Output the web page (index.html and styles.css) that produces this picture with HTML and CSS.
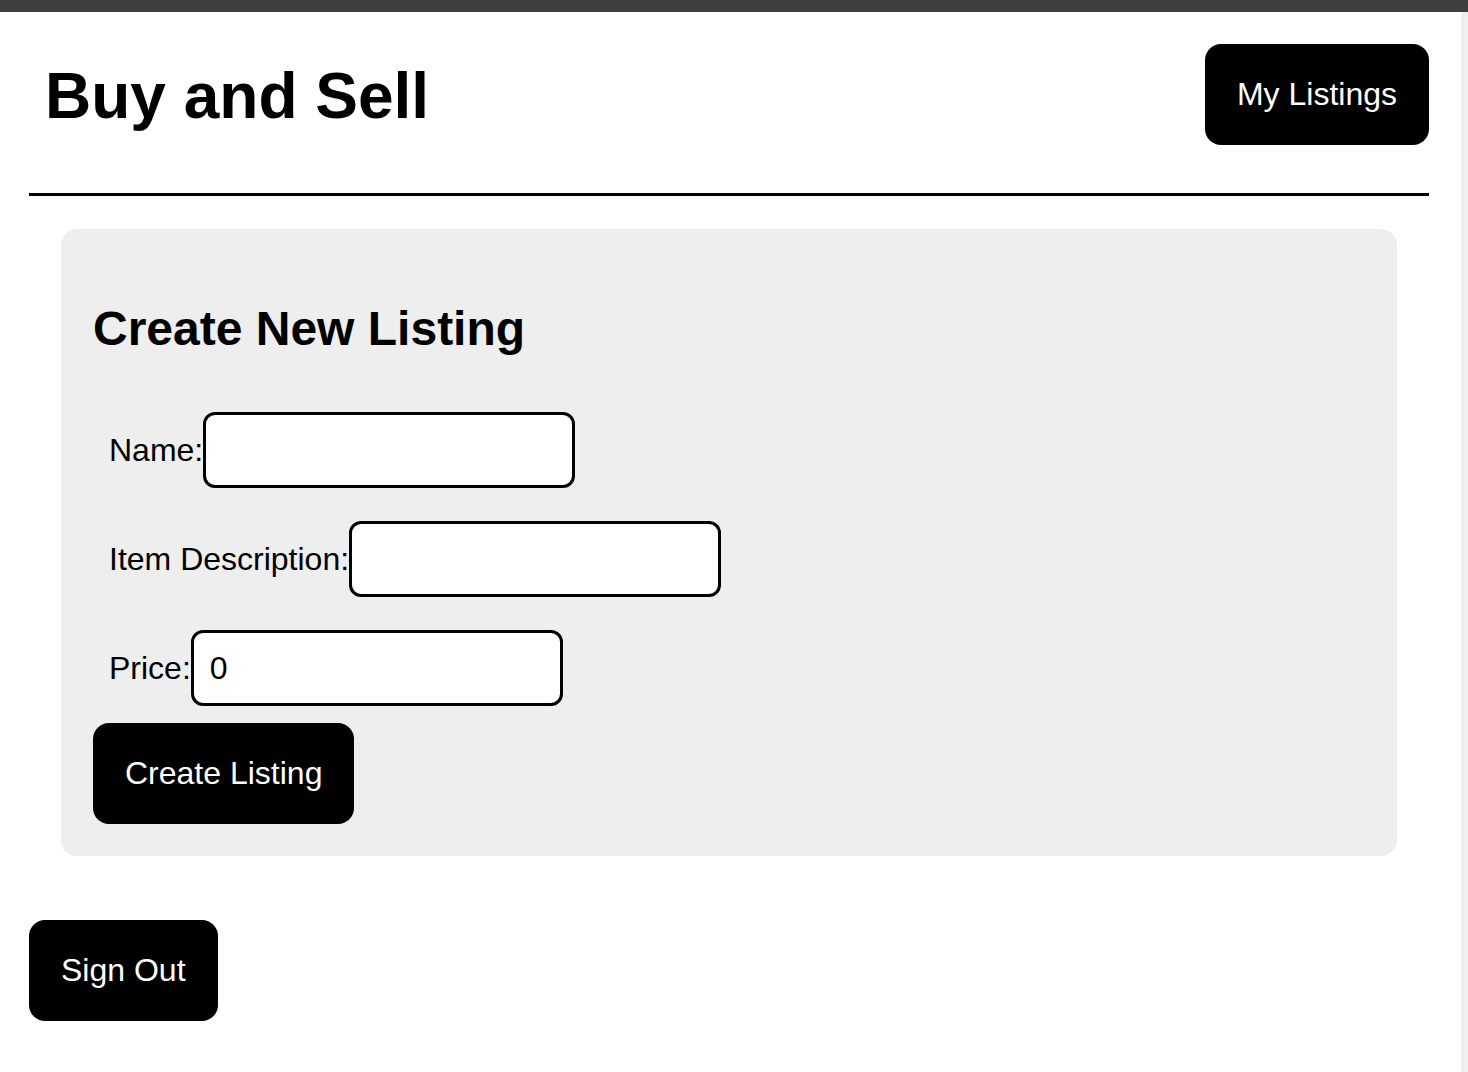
FILE: index.html
```html
<!DOCTYPE html>
<html lang="en">
<head>
<meta charset="utf-8">
<title>Buy and Sell</title>
<link rel="stylesheet" href="styles.css">
</head>
<body>
<div class="topbar"></div>
<div class="scroll-track"></div>
<div class="page">
  <header class="header">
    <h1 class="title">Buy and Sell</h1>
    <button class="btn" type="button">My Listings</button>
  </header>
  <section class="card">
    <h2 class="card-title">Create New Listing</h2>
    <form class="form">
      <div class="row">
        <label class="label" for="name">Name:</label>
        <input class="field" id="name" type="text">
      </div>
      <div class="row">
        <label class="label" for="desc">Item Description:</label>
        <input class="field" id="desc" type="text">
      </div>
      <div class="row">
        <label class="label" for="price">Price:</label>
        <input class="field" id="price" type="number" value="0">
      </div>
      <button class="btn" type="button">Create Listing</button>
    </form>
  </section>
  <button class="btn signout" type="button">Sign Out</button>
</div>
</body>
</html>
```
FILE: styles.css
```css
* {
  box-sizing: border-box;
}

html, body {
  margin: 0;
  padding: 0;
  background: #ffffff;
}

body {
  font-family: "Liberation Sans", Arial, Helvetica, sans-serif;
  color: #000;
}

.topbar {
  height: 12px;
  background: #3e3e3e;
}

.scroll-track {
  position: fixed;
  top: 12px;
  right: 0;
  bottom: 0;
  width: 7px;
  background: #efefef;
}

.page {
  width: 1400px;
  margin-left: 29px;
}

.header {
  display: flex;
  justify-content: space-between;
  align-items: center;
  padding: 32px 0 48px 16px;
  border-bottom: 3px solid #000;
}

.title {
  margin: 0;
  padding-top: 4px;
  font-size: 64px;
  font-weight: 700;
  line-height: 1.15;
}

.btn {
  font-family: "Liberation Sans", Arial, Helvetica, sans-serif;
  font-size: 32px;
  line-height: 37px;
  color: #fff;
  background: #000;
  border: none;
  border-radius: 16px;
  padding: 32px;
  height: 101px;
  cursor: pointer;
}

.card {
  margin: 33px 32px 32px;
  padding: 32px;
  background: #eeeeee;
  border-radius: 16px;
}

.card-title {
  margin: 40px 0;
  font-size: 48px;
  font-weight: 700;
  line-height: 55px;
}

.form {
  display: flex;
  flex-direction: column;
  align-items: flex-start;
}

.row {
  display: flex;
  align-items: center;
  gap: 0;
  padding: 16px 16px 17px;
}

.label {
  font-size: 32px;
  line-height: 37px;
}

.field {
  width: 372px;
  height: 76px;
  font-family: "Liberation Sans", Arial, Helvetica, sans-serif;
  font-size: 32px;
  line-height: 37px;
  padding: 0 16px;
  border: 3px solid #000;
  border-radius: 12px;
  background: #fff;
  color: #000;
  outline: none;
}

.field::-webkit-outer-spin-button,
.field::-webkit-inner-spin-button {
  -webkit-appearance: none;
  margin: 0;
}

.field[type="number"] {
  -moz-appearance: textfield;
}

.signout {
  margin-top: 32px;
}
```
